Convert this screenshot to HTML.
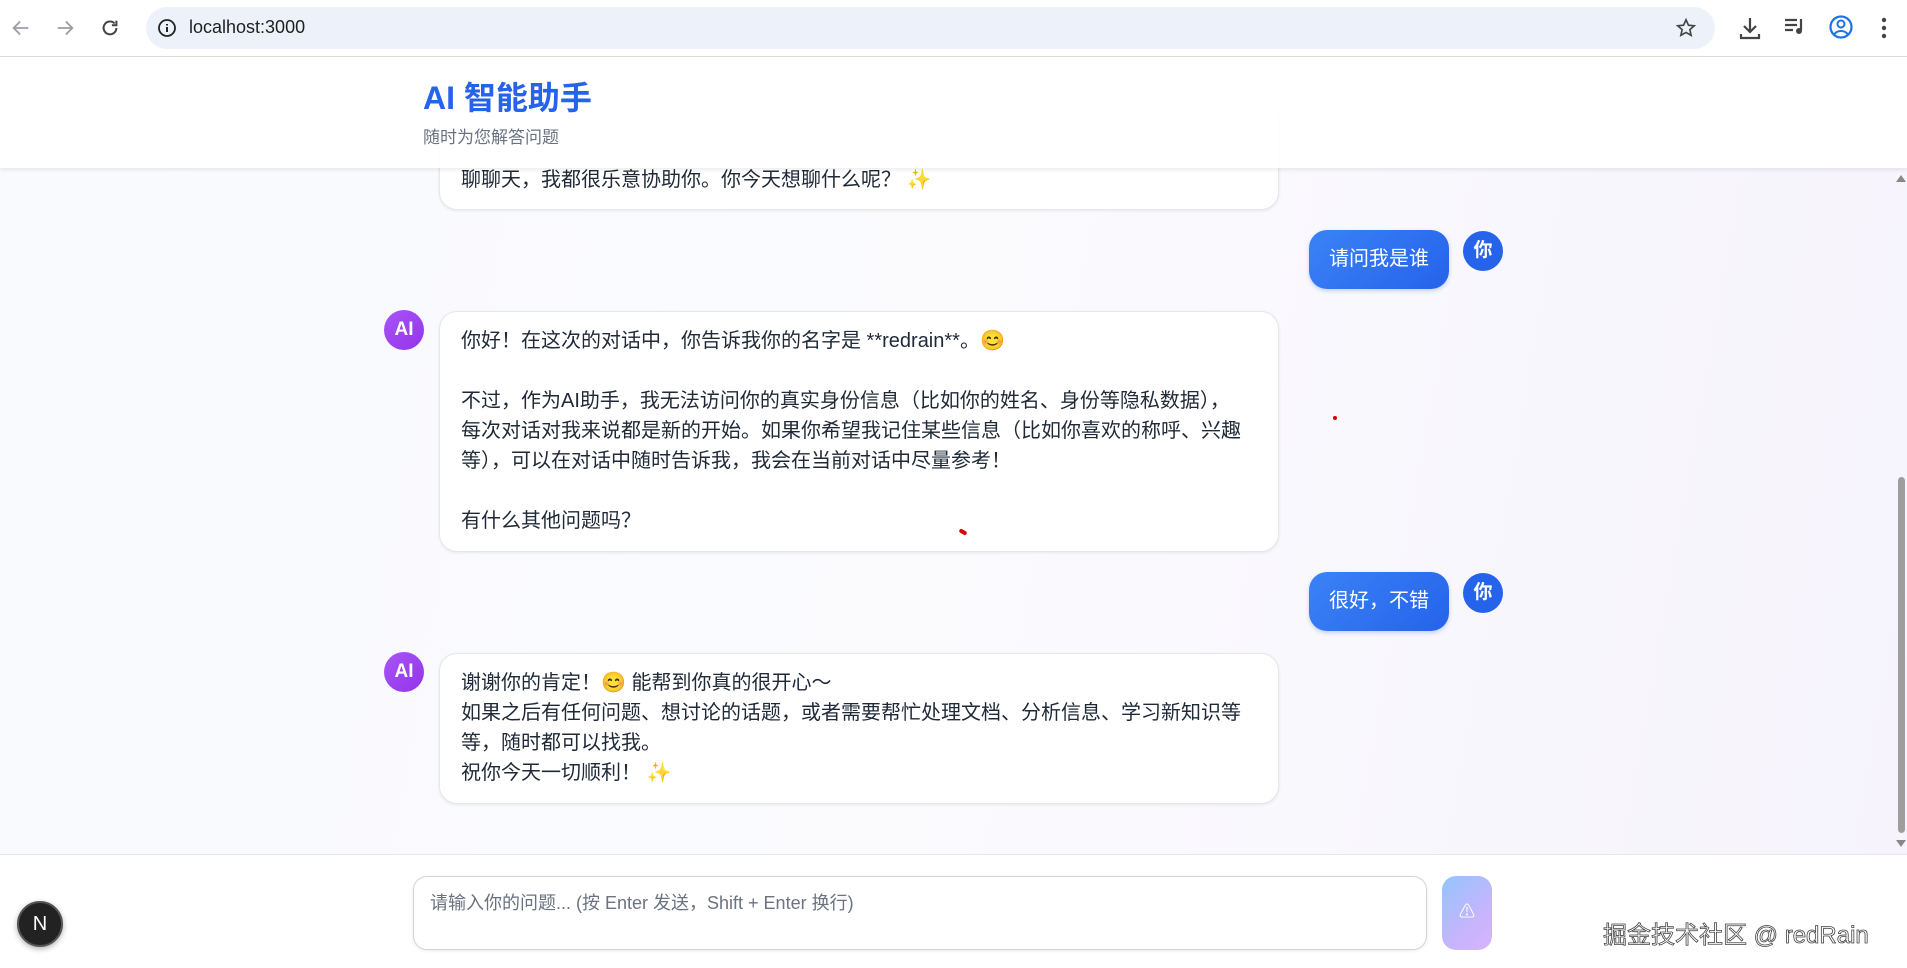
<!DOCTYPE html>
<html><head><meta charset="utf-8"><style>
*{box-sizing:border-box;margin:0;padding:0}
body{width:1907px;height:968px;overflow:hidden;font-family:"Liberation Sans","Noto Sans CJK SC",sans-serif;background:#fff;position:relative}
.tb{position:absolute;left:0;top:0;width:1907px;height:57px;background:#fff;border-bottom:1px solid #dadce0}
.addr{position:absolute;left:146px;top:7px;width:1569px;height:42px;border-radius:21px;background:#edf2fa}
.addr span{position:absolute;left:43px;top:10px;font-size:18px;color:#1f1f1f}
.main{position:absolute;left:0;top:57px;width:1907px;height:797px;background:linear-gradient(100deg,#f8fafd 0%,#fbfbfe 50%,#f6f3fc 100%)}
.hdr{position:absolute;left:0;top:57px;width:1907px;height:111px;background:rgba(255,255,255,.92);box-shadow:0 2px 4px rgba(0,0,0,.08);z-index:5}
.hdr h1{position:absolute;left:423px;top:16px;font-size:32px;font-weight:bold;color:#2563eb}
.hdr p{position:absolute;left:423px;top:66px;font-size:17px;color:#6b7280}
.bub{position:absolute;left:439px;width:840px;background:#fff;border:1px solid #e5e7eb;border-radius:18px;box-shadow:0 1px 3px rgba(0,0,0,.08);padding:14px 21px;font-size:20px;line-height:30px;color:#1f2937;white-space:nowrap}
.av{position:absolute;width:40px;height:40px;border-radius:50%;color:#fff;font-weight:bold;font-size:19px;text-align:center;line-height:40px}
.ai{left:384px;background:linear-gradient(135deg,#a855f7,#9333ea)}
.me{left:1463px;background:#2563eb}
.ub{position:absolute;right:458px;height:59px;border-radius:18px;background:linear-gradient(135deg,#3b82f6,#2563eb);color:#fff;font-size:20px;line-height:59px;padding:0 20px;box-shadow:0 2px 4px rgba(37,99,235,.25)}
.foot{position:absolute;left:0;top:854px;width:1907px;height:114px;background:#fff;border-top:1px solid #e5e7eb}
</style></head><body>
<div class="tb">
<svg style="position:absolute;left:10px;top:17px" width="22" height="22" viewBox="0 0 24 24"><path d="M20 12H5M11 5l-7 7 7 7" fill="none" stroke="#9aa0a6" stroke-width="2"/></svg>
<svg style="position:absolute;left:54px;top:17px" width="22" height="22" viewBox="0 0 24 24"><path d="M4 12h15M13 5l7 7-7 7" fill="none" stroke="#9aa0a6" stroke-width="2"/></svg>
<svg style="position:absolute;left:99px;top:17px" width="22" height="22" viewBox="0 0 24 24"><path d="M19 12a7 7 0 1 1-2-5M19 4v5h-5" fill="none" stroke="#444" stroke-width="2.2"/></svg>
<div class="addr"><svg style="position:absolute;left:11px;top:11px" width="20" height="20" viewBox="0 0 20 20"><circle cx="10" cy="10" r="8" fill="none" stroke="#222" stroke-width="1.8"/><path d="M10 9v5M10 6v1.5" stroke="#222" stroke-width="2"/></svg><span>localhost:3000</span>
<svg style="position:absolute;right:18px;top:10px" width="22" height="22" viewBox="0 0 24 24"><path d="M12 3l2.7 6 6.3.6-4.8 4.2 1.4 6.2L12 16.8 6.4 20l1.4-6.2L3 9.6l6.3-.6z" fill="none" stroke="#444" stroke-width="1.8"/></svg></div>
<svg style="position:absolute;left:1738px;top:15px" width="24" height="26" viewBox="0 0 24 26"><path d="M12 3v14M6 11l6 6 6-6M3 19v4h18v-4" fill="none" stroke="#444" stroke-width="2.2"/></svg>
<svg style="position:absolute;left:1784px;top:17px" width="22" height="20" viewBox="0 0 22 20"><path d="M1 3h12M1 8h12M1 13h8M17 2v11" stroke="#444" stroke-width="2.2"/><circle cx="15" cy="14" r="3" fill="#444"/></svg>
<svg style="position:absolute;left:1828px;top:14px" width="26" height="26" viewBox="0 0 26 26"><circle cx="13" cy="13" r="10.5" fill="none" stroke="#1a73e8" stroke-width="2.2"/><circle cx="13" cy="10" r="3.5" fill="none" stroke="#1a73e8" stroke-width="2"/><path d="M6.5 20c3-4 10-4 13 0" fill="none" stroke="#1a73e8" stroke-width="2"/></svg>
<svg style="position:absolute;left:1880px;top:17px" width="8" height="22" viewBox="0 0 8 22"><circle cx="4" cy="3" r="2.2" fill="#444"/><circle cx="4" cy="11" r="2.2" fill="#444"/><circle cx="4" cy="19" r="2.2" fill="#444"/></svg>
</div>
<div class="main">
<div style="position:absolute;right:2px;top:420px;width:7px;height:356px;background:#9e9e9e;border-radius:4px"></div>
<div style="position:absolute;right:1px;top:118px;width:0;height:0;border:5px solid transparent;border-bottom:7px solid #888;border-top:0"></div>
<div style="position:absolute;right:1px;top:783px;width:0;height:0;border:5px solid transparent;border-top:7px solid #888;border-bottom:0"></div>
</div>
<div class="hdr"><h1>AI 智能助手</h1><p>随时为您解答问题</p></div>
<div class="bub" style="top:100px;height:110px;padding-top:64px">聊聊天，我都很乐意协助你。你今天想聊什么呢？ ✨</div>
<div class="ub" style="top:230px">请问我是谁</div><div class="av me" style="top:231px">你</div>
<div class="av ai" style="top:310px">AI</div>
<div class="bub" style="top:311px;height:241px">你好！在这次的对话中，你告诉我你的名字是 **redrain**。😊<br><br>不过，作为AI助手，我无法访问你的真实身份信息（比如你的姓名、身份等隐私数据），<br>每次对话对我来说都是新的开始。如果你希望我记住某些信息（比如你喜欢的称呼、兴趣<br>等），可以在对话中随时告诉我，我会在当前对话中尽量参考！<br><br>有什么其他问题吗？</div>
<div style="position:absolute;left:1333px;top:416px;width:4px;height:4px;border-radius:50%;background:#d00"></div>
<div style="position:absolute;left:959px;top:530px;width:8px;height:4px;border-radius:2px;background:#d00;transform:rotate(30deg)"></div>
<div class="ub" style="top:572px">很好，不错</div><div class="av me" style="top:573px">你</div>
<div class="av ai" style="top:652px">AI</div>
<div class="bub" style="top:653px;height:151px">谢谢你的肯定！😊 能帮到你真的很开心～<br>如果之后有任何问题、想讨论的话题，或者需要帮忙处理文档、分析信息、学习新知识等<br>等，随时都可以找我。<br>祝你今天一切顺利！ ✨</div>
<div class="foot">
<div style="position:absolute;left:413px;top:21px;width:1014px;height:74px;border:1px solid #d1d5db;border-radius:14px;background:#fff;box-shadow:0 1px 3px rgba(0,0,0,.08);padding:12px 16px;font-size:18px;color:#6b7280">请输入你的问题... (按 Enter 发送，Shift + Enter 换行)</div>
<div style="position:absolute;left:1442px;top:21px;width:50px;height:74px;border-radius:14px;background:linear-gradient(135deg,#93c5fd,#c4b5fd 60%,#d8b4fe);color:#fff;text-align:center;line-height:74px;font-size:16px">⚠</div>
<div style="position:absolute;left:17px;top:46px;width:46px;height:46px;border-radius:50%;background:#222;border:2px solid #555;color:#fff;text-align:center;line-height:42px;font-size:20px;box-shadow:0 2px 6px rgba(0,0,0,.3)">N</div>
<div style="position:absolute;left:1603px;top:60px;font-size:24px;color:#fff;-webkit-text-stroke:0.8px #444;letter-spacing:0">掘金技术社区 @ redRain</div>
</div>
</body></html>
